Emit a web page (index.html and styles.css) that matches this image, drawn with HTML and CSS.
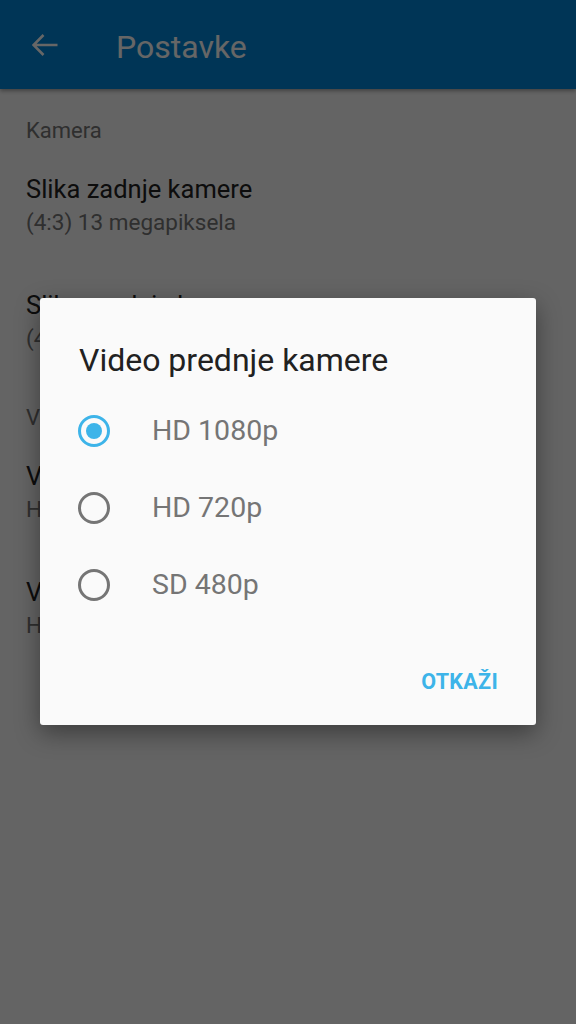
FILE: index.html
```html
<!DOCTYPE html>
<html lang="hr">
<head>
    <meta charset="UTF-8" />
    <title>Postavke</title>
    <link rel="stylesheet" href="styles.css">
</head>
<body>

<div class="appbar">
    <svg class="back" width="26" height="24" viewBox="0 0 26 24">
        <path d="M1.5 12H25.5M11.5 2L1.5 12L11.5 22" fill="none" stroke="#fff" stroke-width="2.6"/>
    </svg>
    <div class="appbar-title">Postavke</div>
</div>

<div class="list">
    <div class="section">Kamera</div>
    <div class="item">
        <div class="item-title">Slika zadnje kamere</div>
        <div class="item-sub">(4:3) 13 megapiksela</div>
    </div>
    <div class="item">
        <div class="item-title">Slika prednje kamere</div>
        <div class="item-sub">(4:3) 5 megapiksela</div>
    </div>
    <div class="section">Video</div>
    <div class="item">
        <div class="item-title">Video zadnje kamere</div>
        <div class="item-sub">HD 1080p</div>
    </div>
    <div class="item">
        <div class="item-title">Video prednje kamere</div>
        <div class="item-sub">HD 1080p</div>
    </div>
</div>

<div class="scrim"></div>

<div class="dialog">
    <div class="dialog-title">Video prednje kamere</div>
    <div class="option">
        <span class="radio checked"></span>
        <span class="option-label">HD 1080p</span>
    </div>
    <div class="option">
        <span class="radio"></span>
        <span class="option-label">HD 720p</span>
    </div>
    <div class="option">
        <span class="radio"></span>
        <span class="option-label">SD 480p</span>
    </div>
    <div class="actions">
        <button class="btn">OTKAŽI</button>
    </div>
</div>

</body>
</html>
```

FILE: styles.css
```css
body {
    margin: 0;
    width: 576px;
    height: 1024px;
    overflow: hidden;
    font-family: Roboto, "Noto Sans", sans-serif;
    background-color: #fafafa;
    position: relative;
}
.appbar {
    height: 89px;
    background-color: #0086d6;
    display: flex;
    align-items: center;
    box-shadow: 0 2px 4px rgba(0,0,0,0.35);
    position: relative;
}
.back {
    margin-left: 32px;
}
.appbar-title {
    margin-left: 58px;
    margin-top: 4px;
    color: #fff;
    font-size: 32px;
}
.list {
    padding-top: 10px;
}
.section {
    margin-top: 9px;
    padding: 0 26px;
    height: 46px;
    line-height: 46px;
    font-size: 22px;
    color: #757575;
}
.item {
    padding: 15px 26px 0;
    height: 116px;
    box-sizing: border-box;
}
.item-title {
    font-size: 25.5px;
    color: #212121;
    line-height: 40px;
}
.item-sub {
    font-size: 22.5px;
    color: #757575;
    line-height: 26px;
}
.scrim {
    position: absolute;
    left: 0;
    top: 0;
    width: 576px;
    height: 1024px;
    background-color: rgba(0,0,0,0.6);
}
.dialog {
    position: absolute;
    left: 40px;
    top: 298px;
    width: 496px;
    height: 427px;
    background-color: #fafafa;
    border-radius: 3px;
    box-shadow: 0 8px 24px rgba(0,0,0,0.4);
    box-sizing: border-box;
    padding-top: 40px;
}
.dialog-title {
    padding-left: 39px;
    font-size: 32px;
    color: #212121;
    line-height: 44px;
    margin-bottom: 10px;
}
.option {
    display: flex;
    align-items: center;
    height: 77px;
    padding-left: 38px;
}
.radio {
    width: 26px;
    height: 26px;
    border: 3px solid #757575;
    border-radius: 50%;
    position: relative;
    flex-shrink: 0;
}
.radio.checked {
    border-color: #3db4e9;
}
.radio.checked::after {
    content: "";
    position: absolute;
    left: 5px;
    top: 5px;
    width: 16px;
    height: 16px;
    border-radius: 50%;
    background-color: #3db4e9;
}
.option-label {
    margin-left: 42px;
    font-size: 28.5px;
    color: #757575;
}
.actions {
    display: flex;
    justify-content: flex-end;
    padding: 46px 38px 0 0;
}
.btn {
    background: none;
    border: none;
    padding: 0;
    font-family: Roboto, sans-serif;
    font-weight: bold;
    font-size: 21.5px;
    line-height: 26px;
    color: #3db4e9;
    letter-spacing: 0.3px;
}
```
